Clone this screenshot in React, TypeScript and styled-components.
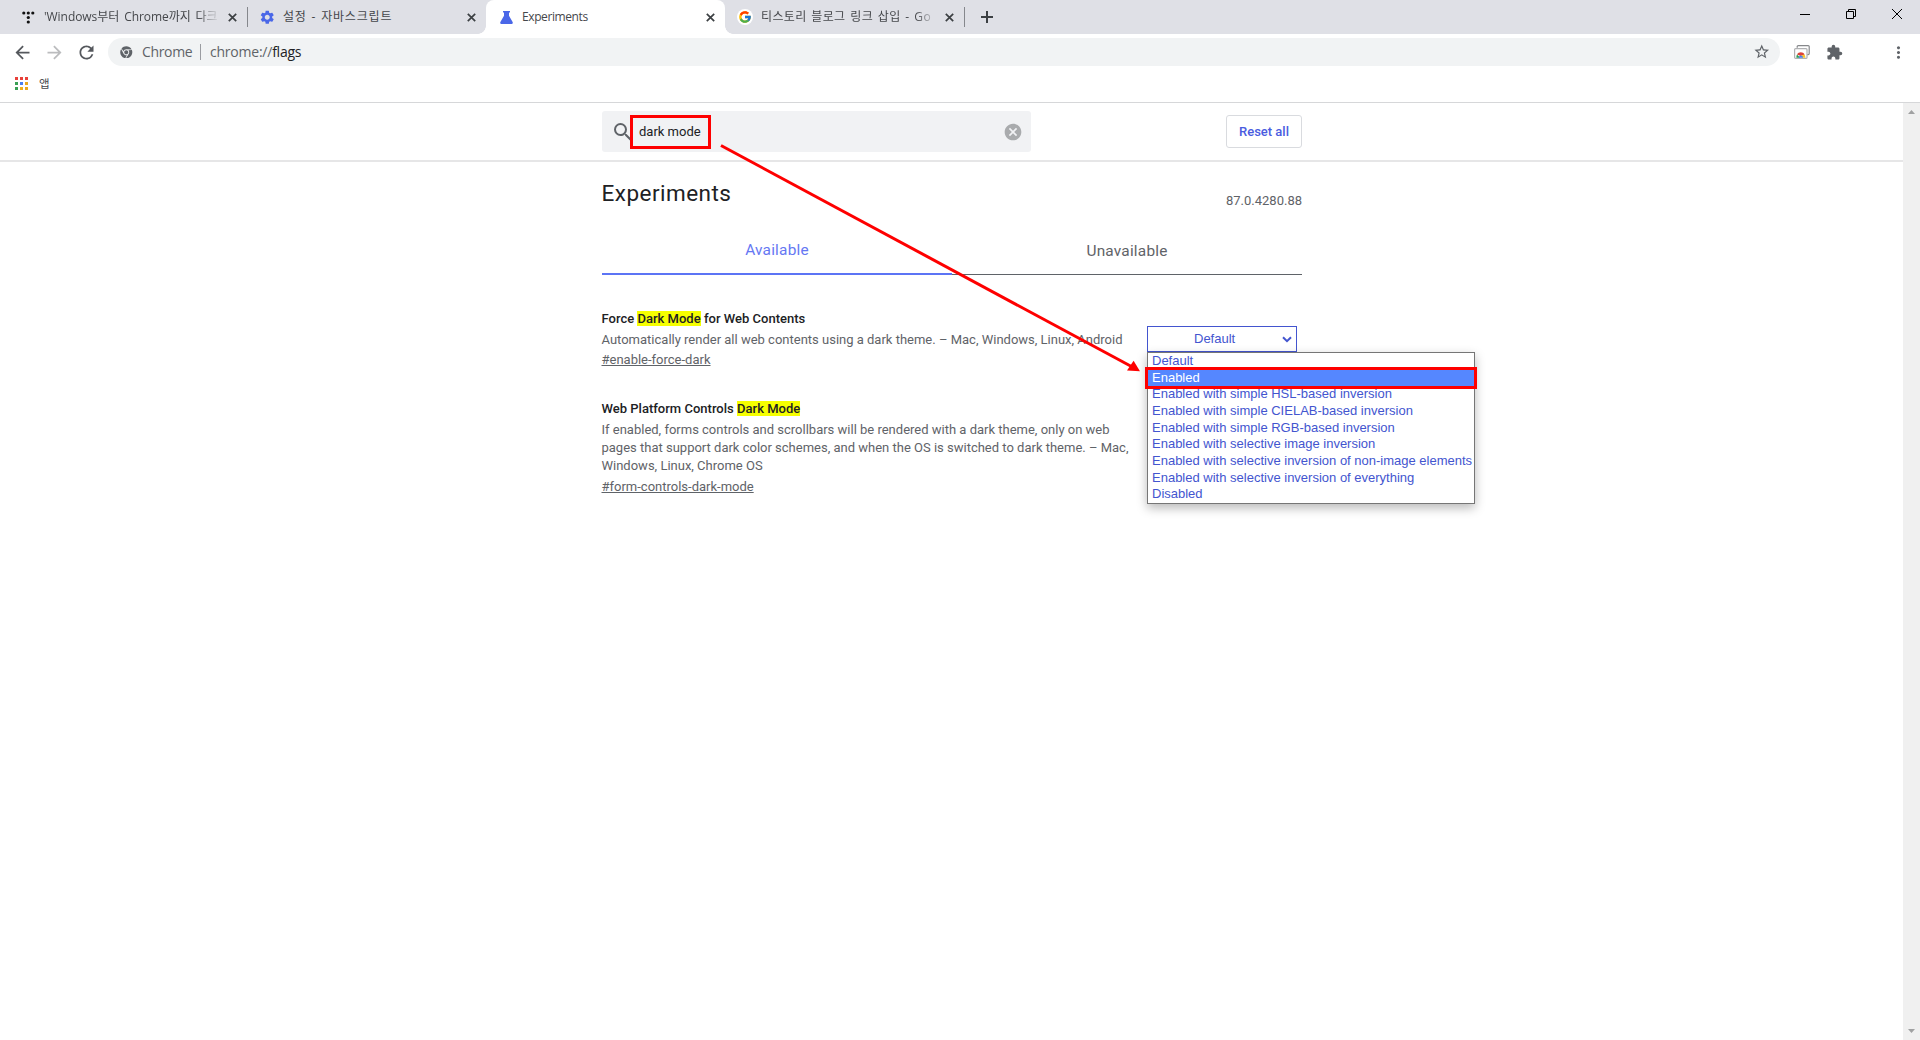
import React from 'react';
import styled, { createGlobalStyle } from 'styled-components';
import {
  MdArrowBack,
  MdArrowForward,
  MdRefresh,
  MdStarBorder,
  MdExtension,
  MdMoreVert,
  MdSettings,
  MdSearch,
  MdCancel,
} from 'react-icons/md';
import { FcGoogle } from 'react-icons/fc';
import { FaChrome } from 'react-icons/fa';

const uiFont = `'Open Sans', 'Noto Sans CJK KR', sans-serif`;

const Global = createGlobalStyle`
  *, *::before, *::after { box-sizing: border-box; }
  body { margin: 0; background: #fff; overflow: hidden; }
  svg { display: block; flex: none; }
`;

const Window = styled.div`
  position: relative;
  width: 1920px;
  height: 1040px;
  display: flex;
  flex-direction: column;
  overflow: hidden;
  font-family: Roboto, sans-serif;
`;

/* Tab strip */
const TabStrip = styled.div`
  display: flex;
  height: 34px;
  padding-left: 8px;
  background: #dfe0e6;
`;

const Tab = styled.div<{ $active?: boolean; $divider?: boolean }>`
  position: relative;
  display: flex;
  align-items: center;
  width: 239px;
  height: 34px;
  padding: 0 10.5px 0 12px;
  background: ${(p) => (p.$active ? '#fff' : 'transparent')};
  border-radius: 8px 8px 0 0;
  ${(p) =>
    p.$divider &&
    `&::after { content: ''; position: absolute; right: -1px; top: 7px; width: 1px; height: 20px; background: #85878c; }`}
  ${(p) =>
    p.$active &&
    `
    &::before, &::after { content: ''; position: absolute; bottom: 0; width: 8px; height: 8px; }
    &::before { left: -8px; background: radial-gradient(circle at 0 0, transparent 7.5px, #fff 8px); }
    &::after { right: -8px; background: radial-gradient(circle at 100% 0, transparent 7.5px, #fff 8px); }
  `}
`;

const Favicon = styled.div`
  display: flex;
  align-items: center;
  justify-content: center;
  width: 16px;
  height: 16px;
  border-radius: 50%;
`;

const GoogleFavicon = styled(Favicon)`
  background: #fff;
`;

const TabTitle = styled.div<{ $spacing: number; $word?: number; $fade?: boolean }>`
  flex: 1;
  min-width: 0;
  margin: 0 8px;
  overflow: hidden;
  white-space: pre;
  font: 12px/20px ${uiFont};
  letter-spacing: ${(p) => p.$spacing}px;
  word-spacing: ${(p) => p.$word ?? 0}px;
  color: #45474b;
  ${(p) => p.$fade && 'mask-image: linear-gradient(90deg, #000 calc(100% - 22px), transparent);'}
`;

const NewTab = styled.div`
  display: flex;
  align-items: center;
  padding-left: 17px;
`;

const WindowControls = styled.div`
  display: flex;
  margin-left: auto;
`;

const WindowButton = styled.div`
  display: flex;
  justify-content: center;
  width: 46px;
  padding-top: 9px;
`;

/* Toolbar */
const Toolbar = styled.div`
  display: flex;
  align-items: center;
  height: 36px;
  padding: 0 12px 0 11px;
  color: #5f6368;
`;

const NavButton = styled.div<{ $dim?: boolean }>`
  display: flex;
  align-items: center;
  justify-content: center;
  width: 32px;
  color: ${(p) => (p.$dim ? '#bbbcbe' : '#55585d')};
`;

const NavGroup = styled.div`
  display: flex;
  width: 97px;
  margin-left: -5px;
`;

const Omnibox = styled.div`
  display: flex;
  align-items: center;
  width: 1672px;
  height: 28px;
  margin-left: 5px;
  padding: 0 10px 0 12px;
  border-radius: 14px;
  background: #f1f3f4;
  font: 14px/20px ${uiFont};
`;

const SchemeLabel = styled.span`
  width: 51px;
  margin-left: 9.5px;
  padding-bottom: 1px;
  letter-spacing: -0.35px;
`;

const OmniDivider = styled.span`
  width: 1px;
  height: 16px;
  margin: 0 9px 0 7px;
  background: #9a9ca1;
`;

const Url = styled.span`
  flex: 1;
  padding-bottom: 1px;
  letter-spacing: -0.23px;
`;

const UrlPath = styled.span`
  color: #202124;
`;

const Extensions = styled.div`
  display: flex;
  align-items: center;
  gap: 16px;
  margin-left: 14px;
`;

const MenuSlot = styled.div`
  margin-left: auto;
`;

const BookmarkBar = styled.div`
  display: flex;
  align-items: center;
  gap: 11px;
  height: 33px;
  padding: 0 0 5px 15px;
  border-bottom: 1px solid #d6d7d9;
  font: 12px/20px ${uiFont};
  color: #45474b;
`;

const AppsGrid = styled.div`
  display: grid;
  grid-template-columns: repeat(3, 3px);
  grid-auto-rows: 3px;
  gap: 2px;
`;

const AppsDot = styled.i<{ $color: string }>`
  background: ${(p) => p.$color};
`;

const BookmarkLabel = styled.span`
  font-size: 11.5px;
`;

/* Page */
const Page = styled.div`
  display: flex;
  flex: 1;
  min-height: 0;
`;

const Content = styled.main`
  flex: 1;
  font-size: 13px;
`;

const Scrollbar = styled.div`
  display: flex;
  flex-direction: column;
  justify-content: space-between;
  align-items: center;
  width: 17px;
  padding: 7px 0 7px;
  background: #f0f0f0;
`;

const Header = styled.div`
  display: flex;
  align-items: flex-start;
  height: 59px;
  padding: 8px 0 0 602px;
  border-bottom: 2px solid #e6e6e7;
`;

const SearchBox = styled.div`
  display: flex;
  align-items: center;
  width: 429px;
  height: 41px;
  padding: 0 8px 0 9px;
  border-radius: 3px;
  background: #f1f2f4;
`;

const SearchText = styled.span`
  flex: 1;
  margin-left: 4px;
  font-size: 13px;
  line-height: 20px;
  color: #202124;
`;

const ResetButton = styled.div`
  width: 76px;
  height: 33px;
  margin: 4px 0 0 195px;
  border: 1px solid #d9dbdf;
  border-radius: 3px;
  font-size: 13px;
  font-weight: 500;
  line-height: 31px;
  text-align: center;
  color: #4a5ce0;
`;

const Body = styled.div`
  width: 700px;
  margin-left: 602px;
`;

const TitleRow = styled.div`
  display: flex;
  justify-content: space-between;
  height: 64px;
  padding-top: 17px;
`;

const Title = styled.h1`
  margin: 0 0 0 -0.5px;
  font-size: 22.5px;
  font-weight: 400;
  line-height: 28px;
  letter-spacing: 0.47px;
  color: #202124;
`;

const Version = styled.span`
  margin-top: 12px;
  line-height: 20px;
  color: #5f6368;
`;

const PageTabs = styled.div`
  display: grid;
  grid-template-columns: 1fr 1fr;
  height: 49px;
`;

const PageTab = styled.div<{ $selected?: boolean }>`
  padding-top: ${(p) => (p.$selected ? 14 : 15)}px;
  border-bottom: ${(p) => (p.$selected ? '2px solid #5c74f5' : '1px solid #5f6368')};
  font-size: 15.4px;
  line-height: 20px;
  letter-spacing: 0.2px;
  text-align: center;
  color: ${(p) => (p.$selected ? '#6577f3' : '#5f6368')};
`;

const Experiments = styled.div`
  display: flex;
  flex-direction: column;
  gap: 31px;
  padding-top: 35px;
`;

const Experiment = styled.section`
  display: flex;
  justify-content: space-between;
  line-height: 18px;
  color: #5f6368;
`;

const Info = styled.div`
  width: 530px;
  margin-left: -0.5px;
  white-space: nowrap;
`;

const Name = styled.h3`
  margin: 0 0 3px;
  font-size: 13px;
  font-weight: 500;
  letter-spacing: 0.01px;
  color: #202124;
`;

const Mark = styled.mark`
  background: #f6ff00;
  color: #202124;
`;

const Line = styled.div``;

const Permalink = styled.a<{ $top: number }>`
  display: block;
  margin-top: ${(p) => p.$top}px;
  text-decoration: underline;
`;

const SelectWrap = styled.div`
  position: relative;
  width: 155px;
  padding-top: 16px;
`;

const Select = styled.div`
  display: flex;
  align-items: center;
  width: 150px;
  height: 26px;
  padding: 0 4px 0 46px;
  border: 1px solid #4355cf;
  font: 13px/24px 'Liberation Sans', sans-serif;
  color: #4355cf;
`;

const SelectValue = styled.span`
  flex: 1;
`;

const Options = styled.div`
  position: absolute;
  left: 0;
  top: 42px;
  width: 328px;
  height: 152px;
  border: 1px solid #767676;
  background: #fff;
  box-shadow: 0 4px 10px rgba(0, 0, 0, 0.28);
  display: grid;
  grid-template-columns: minmax(0, 1fr);
  grid-template-rows: repeat(9, 1fr);
  font: 13px/15.5px 'Liberation Sans', sans-serif;
  color: #4355cf;
  white-space: nowrap;
`;

const Option = styled.div<{ $hover?: boolean }>`
  padding-left: 4px;
  background: ${(p) => (p.$hover ? '#5587ff' : 'transparent')};
  color: ${(p) => (p.$hover ? '#fff' : 'inherit')};
`;

/* Red markup drawn over the page */
const Markup = styled.svg`
  position: absolute;
  inset: 0;
  pointer-events: none;
`;

const CloseIcon = () => (
  <svg width="9" height="9" viewBox="0 0 9 9" stroke="#3c4043" strokeWidth="1.7">
    <path d="M0.8 0.8l7.4 7.4M8.2 0.8l-7.4 7.4" />
  </svg>
);

const TistoryIcon = () => (
  <svg width="13" height="13" viewBox="0 0 13 13" fill="#111">
    <circle cx="1.8" cy="2" r="1.6" />
    <circle cx="6.3" cy="2" r="1.6" />
    <circle cx="10.8" cy="2" r="1.6" />
    <circle cx="6.3" cy="6.5" r="1.6" />
    <circle cx="6.3" cy="11" r="1.6" />
  </svg>
);

const FlaskIcon = () => (
  <svg width="13" height="13" viewBox="0 0 13 13" fill="#4a67e8">
    <path d="M3 0h7v1.6H9v3.2l3.6 6.2c.5 1-.1 2-1.2 2H1.6c-1.1 0-1.7-1-1.2-2L4 4.8V1.6H3z" />
  </svg>
);

const CastIcon = () => (
  <svg width="16" height="14" viewBox="0 0 16 14" fill="none">
    <path d="M3.2 2.8V1.6q0-1 1-1h10q1 0 1 1v7q0 1-1 1h-1" stroke="#86888b" strokeWidth="1.2" />
    <rect x="0.6" y="3.6" width="12.4" height="9.8" rx="1" fill="#fff" stroke="#b0b1b3" strokeWidth="1.2" />
    <path d="M3 9.4a4.4 4.4 0 0 1 7.6 0l-3.8 1.6z" fill="#dd4237" />
    <path d="M10.6 9.4q.8 1.3.7 3.4H8l-1.2-2z" fill="#f7c52c" />
    <path d="M2.4 12.8q-.2-2.1.6-3.4l3.2 3.4z" fill="#2f9e55" />
    <path d="M4.8 12.8a2.1 2.3 0 0 1 4.2 0z" fill="#4a80f0" />
  </svg>
);

const ScrollArrow = ({ down }: { down?: boolean }) => (
  <svg width="7" height="4" viewBox="0 0 7 4" fill="#a0a1a2">
    <path d={down ? 'M0 0h7L3.5 4z' : 'M0 4h7L3.5 0z'} />
  </svg>
);

const appColors = [
  '#e8413a', '#e8413a', '#e8413a',
  '#3a9f54', '#4a7ff0', '#eaa81c',
  '#3a9f54', '#f0b01c', '#eaa81c',
];

const options = [
  'Default',
  'Enabled',
  'Enabled with simple HSL-based inversion',
  'Enabled with simple CIELAB-based inversion',
  'Enabled with simple RGB-based inversion',
  'Enabled with selective image inversion',
  'Enabled with selective inversion of non-image elements',
  'Enabled with selective inversion of everything',
  'Disabled',
];

export default function App() {
  return (
    <Window>
      <Global />
      <TabStrip>
        <Tab $divider>
          <Favicon><TistoryIcon /></Favicon>
          <TabTitle $spacing={-0.05} $word={1.8} $fade>'Windows부터 Chrome까지 다크</TabTitle>
          <CloseIcon />
        </Tab>
        <Tab>
          <Favicon><MdSettings size={16.5} color="#4a67e8" /></Favicon>
          <TabTitle $spacing={0.8} $word={1}>설정 - 자바스크립트</TabTitle>
          <CloseIcon />
        </Tab>
        <Tab $active>
          <Favicon><FlaskIcon /></Favicon>
          <TabTitle $spacing={-0.4}>Experiments</TabTitle>
          <CloseIcon />
        </Tab>
        <Tab $divider>
          <GoogleFavicon><FcGoogle size={14} /></GoogleFavicon>
          <TabTitle $spacing={0.35} $word={1.3} $fade>티스토리 블로그 링크 삽입 - Go</TabTitle>
          <CloseIcon />
        </Tab>
        <NewTab>
          <svg width="12" height="12" viewBox="0 0 12 12" stroke="#3c4043" strokeWidth="2">
            <path d="M6 0v12M0 6h12" />
          </svg>
        </NewTab>
        <WindowControls>
          <WindowButton>
            <svg width="10" height="10" stroke="#000"><path d="M0 5.5h10" /></svg>
          </WindowButton>
          <WindowButton>
            <svg width="10" height="10" fill="none" stroke="#000">
              <path d="M0.5 2.5h7v7h-7zM2.5 2.5v-2h7v7h-2" />
            </svg>
          </WindowButton>
          <WindowButton>
            <svg width="10" height="10" stroke="#000"><path d="M0 0l10 10M10 0L0 10" /></svg>
          </WindowButton>
        </WindowControls>
      </TabStrip>

      <Toolbar>
        <NavGroup>
          <NavButton><MdArrowBack size={21} /></NavButton>
          <NavButton $dim><MdArrowForward size={21} /></NavButton>
          <NavButton><MdRefresh size={21} /></NavButton>
        </NavGroup>
        <Omnibox>
          <FaChrome size={12.5} />
          <SchemeLabel>Chrome</SchemeLabel>
          <OmniDivider />
          <Url>chrome://<UrlPath>flags</UrlPath></Url>
          <MdStarBorder size={17.5} />
        </Omnibox>
        <Extensions>
          <CastIcon />
          <MdExtension size={17} />
        </Extensions>
        <MenuSlot><MdMoreVert size={19} /></MenuSlot>
      </Toolbar>

      <BookmarkBar>
        <AppsGrid>
          {appColors.map((c, i) => <AppsDot key={i} $color={c} />)}
        </AppsGrid>
        <BookmarkLabel>앱</BookmarkLabel>
      </BookmarkBar>

      <Page>
        <Content>
          <Header>
            <SearchBox>
              <MdSearch size={24} color="#5f6368" />
              <SearchText>dark mode</SearchText>
              <MdCancel size={20} color="#a9abad" />
            </SearchBox>
            <ResetButton>Reset all</ResetButton>
          </Header>
          <Body>
            <TitleRow>
              <Title>Experiments</Title>
              <Version>87.0.4280.88</Version>
            </TitleRow>
            <PageTabs>
              <PageTab $selected>Available</PageTab>
              <PageTab>Unavailable</PageTab>
            </PageTabs>
            <Experiments>
              <Experiment>
                <Info>
                  <Name>Force <Mark>Dark Mode</Mark> for Web Contents</Name>
                  <Line>Automatically render all web contents using a dark theme. – Mac, Windows, Linux, Android</Line>
                  <Permalink $top={2}>#enable-force-dark</Permalink>
                </Info>
                <SelectWrap>
                  <Select>
                    <SelectValue>Default</SelectValue>
                    <svg width="10" height="7" viewBox="0 0 10 7" fill="none" stroke="#4355cf" strokeWidth="2">
                      <path d="M1 1.2l4 4 4-4" />
                    </svg>
                  </Select>
                  <Options>
                    {options.map((o, i) => <Option key={o} $hover={i === 1}>{o}</Option>)}
                  </Options>
                </SelectWrap>
              </Experiment>
              <Experiment>
                <Info>
                  <Name>Web Platform Controls <Mark>Dark Mode</Mark></Name>
                  <Line>If enabled, forms controls and scrollbars will be rendered with a dark theme, only on web</Line>
                  <Line>pages that support dark color schemes, and when the OS is switched to dark theme. – Mac,</Line>
                  <Line>Windows, Linux, Chrome OS</Line>
                  <Permalink $top={3}>#form-controls-dark-mode</Permalink>
                </Info>
              </Experiment>
            </Experiments>
          </Body>
        </Content>
        <Scrollbar>
          <ScrollArrow />
          <ScrollArrow down />
        </Scrollbar>
      </Page>

      <Markup width="1920" height="1040" fill="none" stroke="#fe0000" strokeWidth="3">
        <rect x="631.5" y="116.5" width="78" height="31" />
        <rect x="1146.5" y="368.5" width="329" height="19" />
        <path d="M721 145.5L1131 366.3" />
        <path d="M1140 371.3l-13-.8 6.6-9.8z" fill="#fe0000" stroke="none" />
      </Markup>
    </Window>
  );
}
